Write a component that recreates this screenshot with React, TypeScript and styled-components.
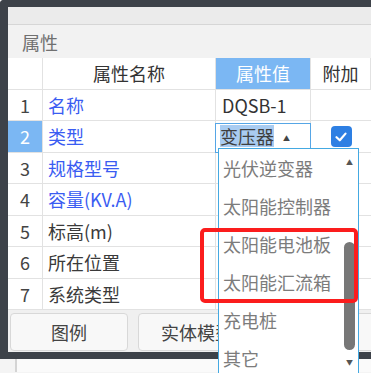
import styled, { createGlobalStyle } from 'styled-components';

const GlobalStyle = createGlobalStyle`
  html, body {
    margin: 0;
    padding: 0;
    background: #f4f4f4;
    overflow: hidden;
  }
  body {
    font-family: "Noto Sans CJK SC", "Noto Sans", sans-serif;
  }
`;

type Row = { no: number; name: string; link?: boolean; value?: string };

const rows: Row[] = [
  { no: 1, name: '名称', link: true, value: 'DQSB-1' },
  { no: 2, name: '类型', link: true },
  { no: 3, name: '规格型号', link: true },
  { no: 4, name: '容量(KV.A)', link: true },
  { no: 5, name: '标高(m)' },
  { no: 6, name: '所在位置' },
  { no: 7, name: '系统类型' },
];

const options = ['光伏逆变器', '太阳能控制器', '太阳能电池板', '太阳能汇流箱', '充电桩', '其它'];

export default function App() {
  return (
    <>
      <GlobalStyle />
      <St.Page>
        <St.Window>
          <St.TitleBar />
          <St.SectionHead>属性</St.SectionHead>
          <St.Table>
            <St.HeadCell />
            <St.HeadCell>属性名称</St.HeadCell>
            <St.HeadCell $active>属性值</St.HeadCell>
            <St.HeadCell>附加</St.HeadCell>
            {rows.map((r) => (
              <St.RowGroup key={r.no}>
                <St.IndexCell $active={r.no === 2}>{r.no}</St.IndexCell>
                <St.NameCell $link={r.link}>{r.name}</St.NameCell>
                <St.ValueCell>
                  {r.no === 2 ? (
                    <St.Select>
                      <St.Selected>变压器</St.Selected>
                      <St.Caret>▲</St.Caret>
                    </St.Select>
                  ) : (
                    r.value
                  )}
                </St.ValueCell>
                <St.ExtraCell>
                  {r.no === 2 && (
                    <St.Checkbox>
                      <svg width="14" height="14" viewBox="0 0 14 14">
                        <path d="M2.5 7.2 L5.8 10.3 L11.5 3.6" fill="none" stroke="#fff" strokeWidth="2.2" strokeLinecap="round" strokeLinejoin="round" />
                      </svg>
                    </St.Checkbox>
                  )}
                </St.ExtraCell>
              </St.RowGroup>
            ))}
          </St.Table>
          <St.ButtonBar>
            <St.Button>图例</St.Button>
            <St.Button>实体模型</St.Button>
            <St.Button>属性</St.Button>
          </St.ButtonBar>
        </St.Window>
        <St.Ground />

        <St.Dropdown>
          <St.OptionList>
            {options.map((o) => (
              <St.Option key={o}>{o}</St.Option>
            ))}
          </St.OptionList>
          <St.ScrollTrack>
            <St.Arrow>▲</St.Arrow>
            <St.Thumb />
            <St.Arrow>▼</St.Arrow>
          </St.ScrollTrack>
        </St.Dropdown>

        <St.Highlight />
      </St.Page>
    </>
  );
}

const GRID = '#e2e2e2';
const HEAD_BLUE = '#7bb7f3';

const St = {
  Page: styled.div`
    position: relative;
    width: 371px;
    height: 373px;
    overflow: hidden;
  `,
  Window: styled.div`
    width: 400px;
    border-top: 7px solid #3d4249;
    border-left: 8px solid #3d4249;
    border-bottom: 7px solid #3d4249;
    border-top-left-radius: 4px;
    background: #f0f0f0;
  `,
  TitleBar: styled.div`
    height: 17px;
    background: #ebebeb;
    border-bottom: 1px solid #d6d6d6;
  `,
  SectionHead: styled.div`
    height: 33px;
    display: flex;
    align-items: center;
    padding-left: 14px;
    font-size: 18px;
    color: #707070;
    background: #f2f2f2;
  `,
  Table: styled.div`
    display: grid;
    grid-template-columns: 35px 173px 95px 60px;
    grid-auto-rows: 31.5px;
    background: #fff;
  `,
  RowGroup: styled.div`
    display: contents;
  `,
  HeadCell: styled.div<{ $active?: boolean }>`
    display: flex;
    align-items: center;
    justify-content: center;
    font-size: 18px;
    color: ${({ $active }) => ($active ? '#fff' : '#333')};
    background: ${({ $active }) => ($active ? HEAD_BLUE : '#fff')};
    border-right: 1px solid ${GRID};
    border-bottom: 1px solid ${GRID};
  `,
  IndexCell: styled.div<{ $active?: boolean }>`
    display: flex;
    align-items: center;
    justify-content: center;
    font-size: 18px;
    color: ${({ $active }) => ($active ? '#fff' : '#444')};
    background: ${({ $active }) => ($active ? HEAD_BLUE : '#fff')};
    border-right: 1px solid ${GRID};
    border-bottom: 1px solid ${GRID};
  `,
  NameCell: styled.div<{ $link?: boolean }>`
    display: flex;
    align-items: center;
    padding-left: 5px;
    font-size: 18px;
    color: ${({ $link }) => ($link ? '#3a5cf2' : '#3a3a3a')};
    border-right: 1px solid ${GRID};
    border-bottom: 1px solid ${GRID};
  `,
  ValueCell: styled.div`
    position: relative;
    display: flex;
    align-items: center;
    padding-left: 6px;
    font-size: 18px;
    color: #333;
    border-right: 1px solid ${GRID};
    border-bottom: 1px solid ${GRID};
  `,
  ExtraCell: styled.div`
    display: flex;
    align-items: center;
    justify-content: center;
    border-bottom: 1px solid ${GRID};
  `,
  Select: styled.div`
    position: absolute;
    left: -1px;
    top: 2px;
    right: -1px;
    height: 30px;
    display: flex;
    align-items: flex-start;
    padding: 1px 0 0 4px;
    border: 1px solid #56a6e6;
    background: #fff;
    box-sizing: border-box;
  `,
  Selected: styled.span`
    background: #a9ccf1;
    color: #3f3f3f;
    font-size: 18px;
    line-height: 22px;
  `,
  Caret: styled.span`
    margin: 2px 0 0 9px;
    font-size: 7px;
    line-height: 22px;
    color: #444;
  `,
  Checkbox: styled.div`
    width: 21px;
    height: 21px;
    margin-top: 1px;
    border-radius: 4px;
    background: #2d7fe3;
    display: flex;
    align-items: center;
    justify-content: center;
  `,
  ButtonBar: styled.div`
    height: 42px;
    box-sizing: border-box;
    padding: 3px 0 1px 2px;
    display: flex;
    gap: 10px;
    background: #f0f0f0;
  `,
  Button: styled.div`
    flex: none;
    width: 118px;
    height: 38px;
    box-sizing: border-box;
    display: flex;
    align-items: center;
    justify-content: center;
    font-size: 18px;
    color: #444;
    background: #f8f8f8;
    border: 1px solid #d8d8d8;
    border-radius: 4px;
  `,
  Ground: styled.div`
    height: 13px;
    margin-left: 15px;
    border-left: 2px solid #d4d4d4;
    background: #fafafa;
  `,
  Dropdown: styled.div`
    position: absolute;
    left: 218px;
    top: 148px;
    width: 141px;
    height: 240px;
    box-sizing: border-box;
    border: 1px solid #44a9e2;
    background: #fff;
    display: flex;
  `,
  OptionList: styled.div`
    flex: 1;
    display: flex;
    flex-direction: column;
  `,
  Option: styled.div`
    height: 38px;
    flex: none;
    display: flex;
    align-items: center;
    padding-left: 4px;
    font-size: 18px;
    color: #7c7c7c;
    white-space: nowrap;
  `,
  ScrollTrack: styled.div`
    width: 17px;
    flex: none;
    display: flex;
    flex-direction: column;
    align-items: center;
    padding-top: 8px;
    box-sizing: border-box;
    height: 228px;
  `,
  Arrow: styled.div`
    font-size: 7px;
    line-height: 10px;
    color: #555;
  `,
  Thumb: styled.div`
    width: 11px;
    height: 108px;
    margin: 75px 0 7px;
    border-radius: 6px;
    background: #777;
  `,
  Highlight: styled.div`
    position: absolute;
    left: 200px;
    top: 228px;
    width: 158px;
    height: 75px;
    box-sizing: border-box;
    border: 4px solid #fb1d1d;
    border-radius: 5px;
  `,
};
